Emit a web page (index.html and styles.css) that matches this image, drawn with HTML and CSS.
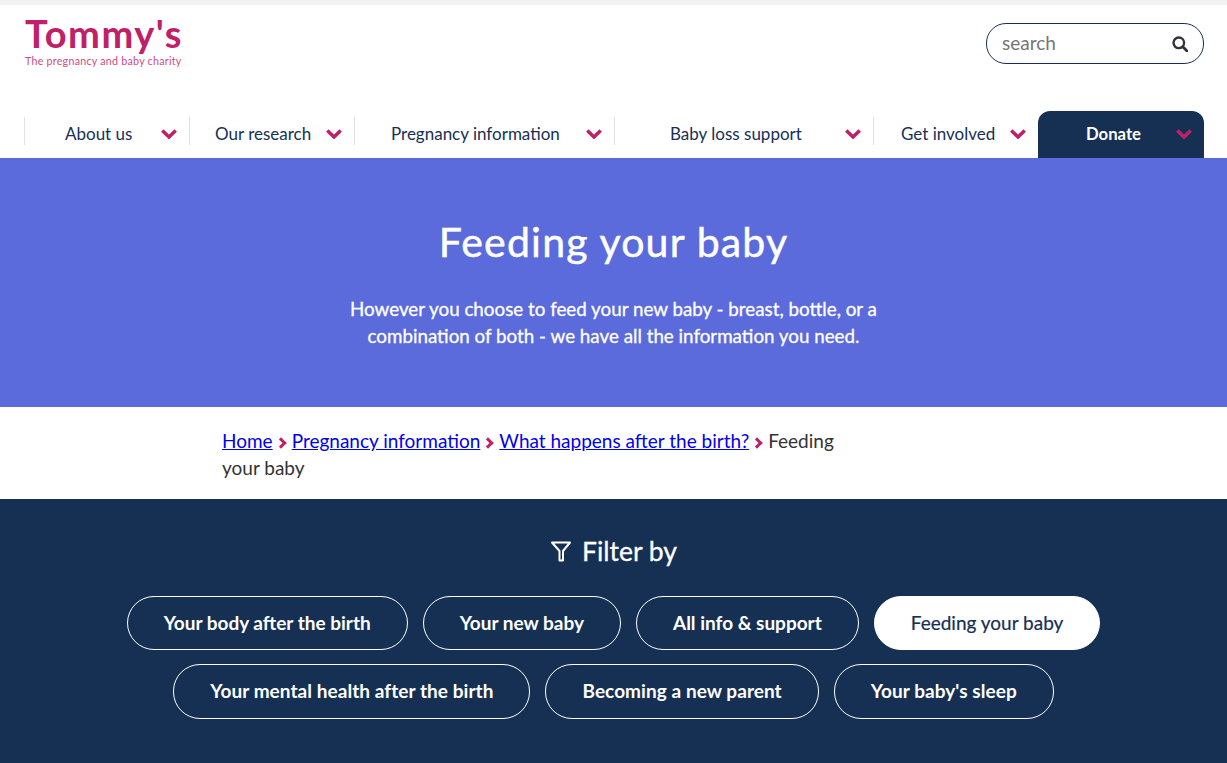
FILE: index.html
```html
<!DOCTYPE html>
<html lang="en">
<head>
    <meta charset="UTF-8">
    <meta name="viewport" content="width=device-width, initial-scale=1.0">
    <title>Feeding your baby</title>
    <link rel="stylesheet" href="styles.css">
</head>
<body>
    <header class="site-header">
        <div class="header-top">
            <a class="logo" href="#">
                <span class="logo-name">Tommy's</span>
                <span class="logo-tag">The pregnancy and baby charity</span>
            </a>
            <form class="search">
                <span class="search-text">search</span>
                <svg class="search-icon" width="16" height="16" viewBox="0 0 16 16"><circle cx="6.800" cy="6.800" r="5.300" fill="none" stroke="#333" stroke-width="2.400"/><path d="M10.800 10.800 L15 15" stroke="#333" stroke-width="2.800" stroke-linecap="round"/></svg>
            </form>
        </div>
        <nav class="main-nav">
            <a class="nav-item" href="#"><span class="pad-about">About us</span><svg width="16" height="10" viewBox="0 0 16 10"><path d="M1.300 1.500 L8 8 L14.700 1.500" fill="none" stroke="#c02068" stroke-width="3.500"/></svg></a>
            <a class="nav-item" href="#"><span class="pad-research">Our research</span><svg width="16" height="10" viewBox="0 0 16 10"><path d="M1.300 1.500 L8 8 L14.700 1.500" fill="none" stroke="#c02068" stroke-width="3.500"/></svg></a>
            <a class="nav-item" href="#"><span class="pad-pregnancy">Pregnancy information</span><svg width="16" height="10" viewBox="0 0 16 10"><path d="M1.300 1.500 L8 8 L14.700 1.500" fill="none" stroke="#c02068" stroke-width="3.500"/></svg></a>
            <a class="nav-item" href="#"><span class="pad-loss">Baby loss support</span><svg width="16" height="10" viewBox="0 0 16 10"><path d="M1.300 1.500 L8 8 L14.700 1.500" fill="none" stroke="#c02068" stroke-width="3.500"/></svg></a>
            <a class="nav-item" href="#"><span class="pad-involved">Get involved</span><svg width="16" height="10" viewBox="0 0 16 10"><path d="M1.300 1.500 L8 8 L14.700 1.500" fill="none" stroke="#c02068" stroke-width="3.500"/></svg></a>
            <a class="nav-donate" href="#"><span>Donate</span><svg width="16" height="10" viewBox="0 0 16 10"><path d="M1.300 1.500 L8 8 L14.700 1.500" fill="none" stroke="#c02068" stroke-width="3.500"/></svg></a>
        </nav>
    </header>

    <section class="hero">
        <h1>Feeding your baby</h1>
        <p>However you choose to feed your new baby - breast, bottle, or a combination of both - we have all the information you need.</p>
    </section>

    <div class="breadcrumb">
        <a href="#">Home</a><span class="crumb-sep"></span><a href="#">Pregnancy information</a><span class="crumb-sep"></span><a href="#">What happens after the birth?</a><span class="crumb-sep"></span><span>Feeding</span> <span>your baby</span>
    </div>

    <section class="filter">
        <h2 class="filter-title">
            <svg width="22" height="22" viewBox="0 0 22 22"><path d="M2 2.500 H20 L13 11 V20.500 H9.500 V11 Z" fill="none" stroke="#fff" stroke-width="2" stroke-linejoin="round"/></svg>
            Filter by
        </h2>
        <div class="pill-row">
            <a class="pill" href="#">Your body after the birth</a>
            <a class="pill" href="#">Your new baby</a>
            <a class="pill" href="#">All info &amp; support</a>
            <a class="pill active" href="#">Feeding your baby</a>
        </div>
        <div class="pill-row">
            <a class="pill" href="#">Your mental health after the birth</a>
            <a class="pill" href="#">Becoming a new parent</a>
            <a class="pill" href="#">Your baby's sleep</a>
        </div>
    </section>
</body>
</html>
```

FILE: styles.css
```css
* {
    margin: 0;
    padding: 0;
    box-sizing: border-box;
}

body {
    font-family: Lato, "Open Sans", sans-serif;
    color: #333;
    background: #fff;
    height: 763px;
    overflow: hidden;
}

a {
    text-decoration: none;
}

/* Header */
.site-header {
    border-top: 5px solid #f2f2f2;
    height: 158px;
    padding: 0 23px 0 24px;
    display: flex;
    flex-direction: column;
    justify-content: space-between;
}

.header-top {
    display: flex;
    justify-content: space-between;
    align-items: flex-start;
}

.logo {
    display: flex;
    flex-direction: column;
    padding: 8px 0 0 1px;
    color: #c02068;
}

.logo-name {
    font-weight: 700;
    font-size: 38px;
    line-height: 40px;
    letter-spacing: 1.500px;
}

.logo-tag {
    font-size: 10.700px;
    line-height: 12px;
    margin-top: 2px;
    letter-spacing: 0.250px;
    color: #cf4a86;
}

.search {
    margin-top: 18px;
    width: 218px;
    height: 41px;
    border: 1px solid #163054;
    border-radius: 20px;
    padding: 0 15px;
    display: flex;
    align-items: center;
    justify-content: space-between;
}

.search-text {
    font-size: 19px;
    line-height: 38px;
    margin-top: -2px;
    color: #757575;
}

.main-nav {
    display: grid;
    grid-template-columns: 165px 165px 260px 259px 165px 166px;
    height: 47px;
}

.nav-item {
    display: flex;
    align-items: center;
    justify-content: space-between;
    height: 28px;
    margin-top: 6px;
    padding: 5px 12px 0 0;
    border-left: 1px solid #e2e2e2;
    color: #163054;
    font-size: 17px;
}

.pad-about { padding-left: 40px; }
.pad-research { padding-left: 25px; }
.pad-pregnancy { padding-left: 36px; }
.pad-loss { padding-left: 55px; }
.pad-involved { padding-left: 27px; }

.nav-donate {
    display: flex;
    align-items: center;
    justify-content: space-between;
    background: #163054;
    color: #fff;
    font-weight: 700;
    font-size: 16.700px;
    border-radius: 12px 12px 0 0;
    padding: 0 12px 2px 48px;
}

/* Hero */
.hero {
    height: 249px;
    background: #5c6bdc;
    color: #fff;
    text-align: center;
    padding-top: 60px;
}

.hero h1 {
    font-size: 41px;
    font-weight: 400;
    line-height: 48px;
    letter-spacing: 1.200px;
    -webkit-text-stroke: 0.500px #fff;
}

.hero p {
    width: 560px;
    margin: 29px auto 0;
    font-size: 18.800px;
    line-height: 27px;
    -webkit-text-stroke: 0.300px #fff;
}

/* Breadcrumb */
.breadcrumb {
    height: 92px;
    padding: 20px 0 0 222px;
    width: 850px;
    font-size: 19px;
    line-height: 27px;
    color: #333;
}

.breadcrumb a {
    color: #00e;
    text-decoration: underline;
}

.crumb-sep {
    display: inline-block;
    width: 8px;
    height: 8px;
    margin: 0 7px 1px 4px;
    border-top: 3px solid #c02068;
    border-right: 3px solid #c02068;
    transform: rotate(45deg);
}

/* Filter */
.filter {
    height: 264px;
    background: #163054;
    color: #fff;
    padding-top: 35px;
}

.filter-title {
    display: flex;
    justify-content: center;
    align-items: center;
    gap: 10px;
    font-size: 26.500px;
    font-weight: 400;
    line-height: 34px;
    margin-bottom: 28px;
    -webkit-text-stroke: 0.300px #fff;
}

.pill-row {
    display: flex;
    justify-content: center;
    gap: 15px;
    margin-bottom: 14px;
}

.pill {
    height: 54px;
    padding: 0 36px 2px;
    display: flex;
    align-items: center;
    border: 1px solid #fff;
    border-radius: 27px;
    color: #fff;
    font-size: 19px;
    font-weight: 700;
}

.pill-row + .pill-row .pill {
    height: 55px;
    letter-spacing: 0.060px;
}

.pill.active {
    background: #fff;
    color: #163054;
    font-weight: 400;
    -webkit-text-stroke: 0.200px #163054;
}
```
